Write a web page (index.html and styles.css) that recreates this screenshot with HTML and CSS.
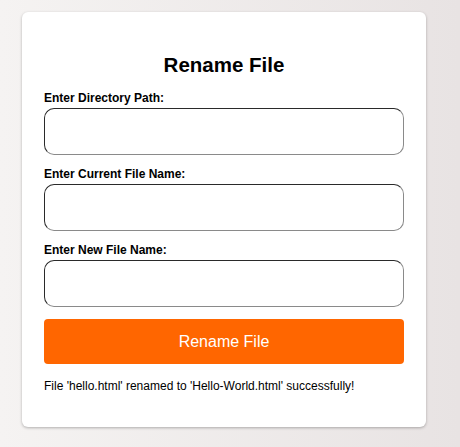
FILE: index.html
```html
<!DOCTYPE html>
<html lang="en">
<head>
<meta charset="utf-8">
<title>Rename File</title>
<link rel="stylesheet" href="styles.css">
</head>
<body>
  <div class="card">
    <h2 class="title">Rename File</h2>
    <form class="form">
      <label class="label" for="dir">Enter Directory Path:</label>
      <input class="field" type="text" id="dir">
      <label class="label" for="cur">Enter Current File Name:</label>
      <input class="field" type="text" id="cur">
      <label class="label" for="new">Enter New File Name:</label>
      <input class="field" type="text" id="new">
      <button class="btn" type="button">Rename File</button>
    </form>
    <p class="message">File 'hello.html' renamed to 'Hello-World.html' successfully!</p>
  </div>
</body>
</html>
```
FILE: styles.css
```css
html, body {
  margin: 0;
  height: 100%;
}
body {
  font-family: "Liberation Sans", Arial, sans-serif;
  background: linear-gradient(to right, #f5f3f2, #e8e3e3);
  padding: 12px 0 0 22px;
  box-sizing: border-box;
  color: #000;
}
.card {
  width: 404px;
  box-sizing: border-box;
  background: #fff;
  border-radius: 6px;
  box-shadow: 0 1px 3px rgba(0, 0, 0, 0.28);
  padding: 22px 22px 34px;
}
.title {
  margin: 19px 0 15px;
  font-size: 20.5px;
  line-height: 23px;
  font-weight: bold;
  text-align: center;
}
.form {
  display: flex;
  flex-direction: column;
  margin: 0;
}
.label {
  font-size: 12px;
  line-height: 14px;
  font-weight: bold;
  margin-bottom: 3px;
}
.field {
  height: 47px;
  box-sizing: border-box;
  margin: 0 0 12px;
  padding: 0 14px;
  border: 1px solid;
  border-color: #2a2a2a #8a8a8a #8a8a8a #2a2a2a;
  border-radius: 10px;
  font-family: inherit;
  font-size: 13px;
  background: #fff;
  outline: none;
}
.btn {
  height: 45px;
  border: none;
  border-radius: 4px;
  background: #ff6600;
  color: #fff;
  font-family: inherit;
  font-size: 16px;
  padding: 0;
  cursor: pointer;
}
.message {
  margin: 15px 0 0;
  font-size: 12px;
  line-height: 14px;
}
```
